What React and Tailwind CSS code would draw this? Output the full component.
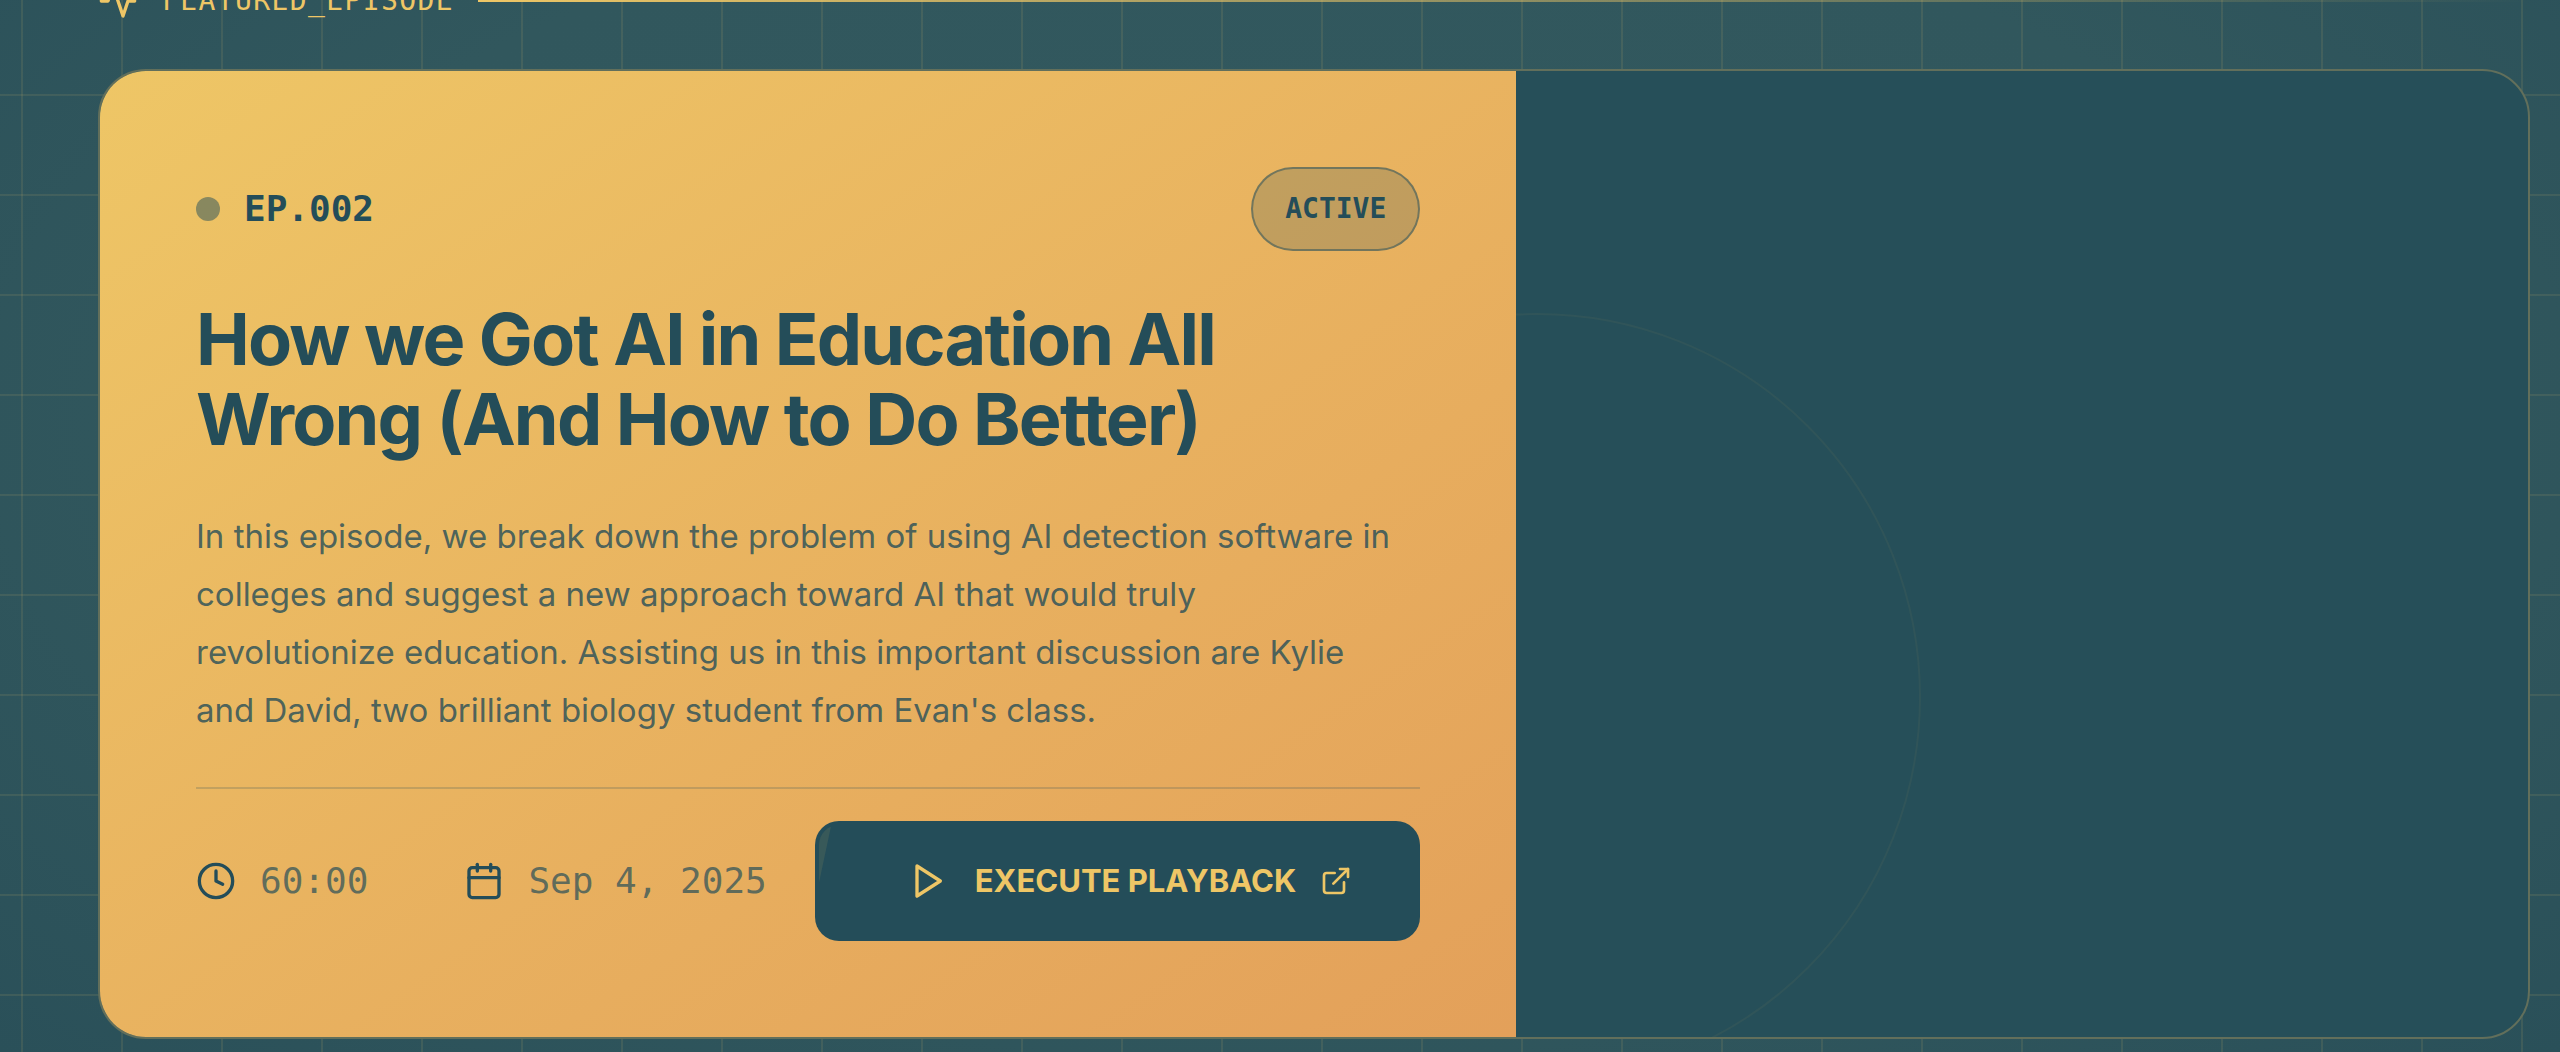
import { Calendar, Clock, ExternalLink } from "lucide-react";

const mono = "font-['DejaVu_Sans_Mono',monospace]";

function OutlineIcon({ children }) {
  return (
    <svg
      className="size-10 shrink-0"
      viewBox="0 0 24 24"
      fill="none"
      stroke="currentColor"
      strokeWidth="2"
      strokeLinecap="round"
      strokeLinejoin="round"
      aria-hidden="true"
    >
      {children}
    </svg>
  );
}

function SectionHeader() {
  return (
    <header className="-mt-[19px] mb-12 flex items-center gap-6 text-[#eec666]">
      <OutlineIcon>
        <path d="M22 12h-4l-3 9L9 3l-3 9H2" />
      </OutlineIcon>
      <span className={`${mono} text-[28px] leading-10 tracking-wider`}>FEATURED_EPISODE</span>
      <span className="h-0.5 flex-1 bg-gradient-to-r from-[#eec666] to-transparent" />
    </header>
  );
}

function PlaybackLink() {
  return (
    <a
      href="#playback"
      className="relative flex h-30 items-center rounded-3xl bg-[#244d59] pr-[68px] pl-[92px] text-[#eec666]"
    >
      <span className="absolute inset-1 overflow-hidden rounded-[20px]">
        <span className="block size-full -translate-x-full -skew-x-12 bg-[#eec666]/10" />
      </span>
      <OutlineIcon>
        <polygon points="6 3 20 12 6 21 6 3" />
      </OutlineIcon>
      <span className="ml-7 text-[31px] leading-12 font-bold whitespace-nowrap">EXECUTE PLAYBACK</span>
      <ExternalLink className="ml-6 size-8 shrink-0" strokeWidth={2} aria-hidden="true" />
    </a>
  );
}

function Meta({ icon: Icon, children }) {
  return (
    <div className="flex items-center gap-6">
      <Icon className="size-10 shrink-0 text-[#244d59]" strokeWidth={2} aria-hidden="true" />
      <span className={`${mono} text-4xl whitespace-nowrap text-[#244d59]/70`}>{children}</span>
    </div>
  );
}

function EpisodeDetails() {
  return (
    <div className="bg-gradient-to-br from-[#eec666] to-[#e3a05a] p-24 text-[#244d59]">
      <div className="flex items-center justify-between">
        <div className="flex items-center gap-6">
          <span className="size-6 rounded-full bg-[#244d59]/50" />
          <span className={`${mono} text-4xl font-bold`}>EP.002</span>
        </div>
        <span
          className={`${mono} rounded-full border-2 border-[#244d59]/50 bg-[#244d59]/20 px-8 py-5 text-[28px] leading-10 font-bold`}
        >
          ACTIVE
        </span>
      </div>
      <h2 className="mt-12 text-7xl leading-20 font-bold tracking-tight">
        How we Got AI in Education All Wrong (And How to Do Better)
      </h2>
      <p className="my-12 text-[33px] leading-[58px] text-[#244d59]/80">
        In this episode, we break down the problem of using AI detection software in colleges and suggest a new
        approach toward AI that would truly <br />
        revolutionize education. Assisting us in this important discussion are Kylie <br />
        and David, two brilliant biology student from Evan's class.
      </p>
      <div className="flex items-center justify-between border-t-2 border-[#244d59]/20 pt-8">
        <div className="flex items-center gap-24">
          <Meta icon={Clock}>60:00</Meta>
          <Meta icon={Calendar}>Sep 4, 2025</Meta>
        </div>
        <PlaybackLink />
      </div>
    </div>
  );
}

function ArtPanel() {
  return (
    <div className="relative overflow-hidden">
      <span className="absolute top-[242px] -left-[363px] size-[768px] rounded-full border-2 border-[#eec666]/5" />
    </div>
  );
}

export default function App() {
  return (
    <main className="relative min-h-screen overflow-hidden bg-[radial-gradient(ellipse_at_50%_40%,#33595f_0%,#31575d_60%,#2a5059_100%)] pr-[30px] pl-[98px] font-[Inter,sans-serif]">
      <div className="absolute inset-0 bg-[linear-gradient(to_right,rgba(238,198,102,0.1)_2px,transparent_2px),linear-gradient(to_bottom,rgba(238,198,102,0.1)_2px,transparent_2px)] bg-[size:100px_100px] bg-[position:21px_94px]" />
      <div className="relative pb-2">
        <SectionHeader />
        <article className="grid grid-cols-[7fr_5fr] overflow-hidden rounded-[48px] border-2 border-[#626f5b] bg-[#264f59]">
          <EpisodeDetails />
          <ArtPanel />
        </article>
      </div>
    </main>
  );
}
